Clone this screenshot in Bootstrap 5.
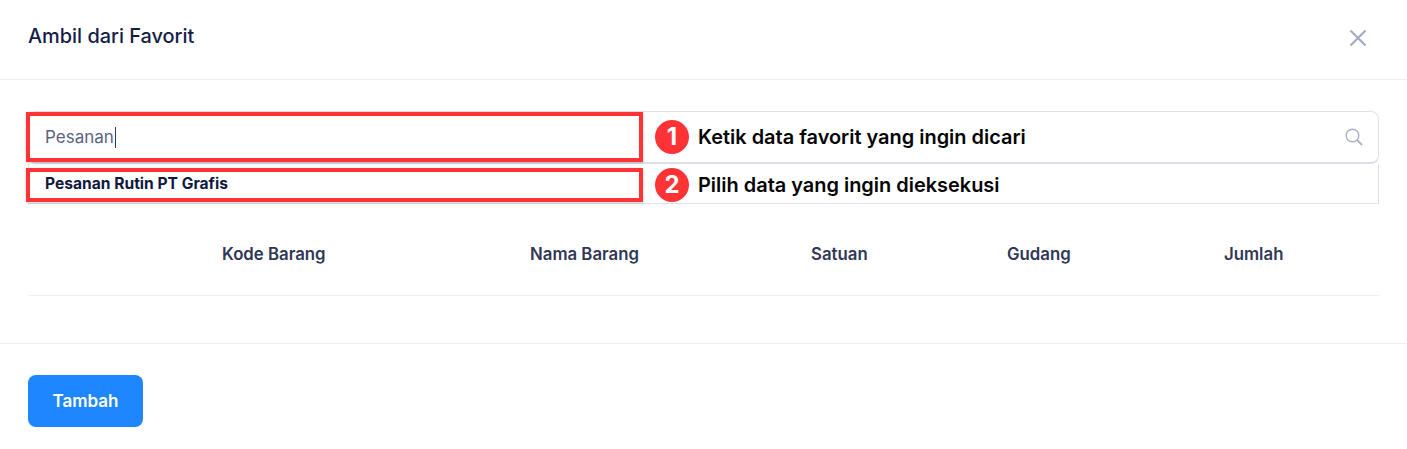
<!DOCTYPE html>
<html lang="id">
<head>
<meta charset="utf-8">
<title>Ambil dari Favorit</title>
<link href="https://cdn.jsdelivr.net/npm/bootstrap@5.3.0/dist/css/bootstrap.min.css" rel="stylesheet">
<style>
html,body{height:449px;overflow:hidden;background:#fff;font-family:Inter,"Liberation Sans",sans-serif}
.fav-head{height:80px;padding:0 28px;border-bottom:1px solid #eff0f4}
.fav-title{font-size:19.9px;font-weight:500;color:#141d47;margin:0 0 7px;line-height:24px}
.fav-close{color:#a3acc2;margin:0 10px 4px 0;padding:0;border:0;background:none;line-height:0}
.fav-body{padding:31px 28px 0;height:264px;position:relative;border-bottom:1px solid #eff0f4}
.fav-search{height:53px;border:1px solid #dfe1ec;border-bottom:2px solid #dcdfe9;border-radius:8px;padding:0 15px 0 16px;width:1351px}
.fav-typed{font-size:17px;color:#5a6484;padding-top:2px}
.fav-caret{display:inline-block;width:1px;height:21px;background:#2f3a63;vertical-align:-5px;margin-left:1px}
.fav-drop{height:40px;width:1351px;border:1px solid #dfe1ec;border-top:0;padding:0 16px;font-size:15.6px;font-weight:700;color:#12193f}
.fav-table{width:1352px;height:92px;padding-top:10px;border-bottom:1px solid #eff0f4;font-size:16.8px;font-weight:600;color:#2f3755}
.fav-c1{width:194px}.fav-c2{width:308px}.fav-c3{width:281px}.fav-c4{width:196px}.fav-c5{width:217px}
.fav-foot{padding:31px 28px}
.fav-btn{width:115px;height:52px;padding:2px 0 0;background:#1e86ff;border:0;border-radius:8px;font-size:17px;font-weight:600;color:#fff}
.mark-box{position:absolute;left:26px;width:617px;border:4px solid #ff3236;box-shadow:0 1px 3px rgba(0,0,0,.2)}
.mark-one{top:32px;height:50px}
.mark-two{top:88px;height:34px}
.mark-note{position:absolute;left:655px;display:flex;align-items:center;gap:9px;font-size:19.95px;font-weight:600;color:#050505;line-height:34px}
.note-one{top:40px}.note-two{top:88px}
.mark-dot{width:34px;height:34px;border-radius:50%;background:#ff3236;color:#fff;font-size:24px;font-weight:700;text-align:center;line-height:34px}
</style>
</head>
<body>
<header class="fav-head d-flex align-items-center justify-content-between">
  <h5 class="fav-title">Ambil dari Favorit</h5>
  <button class="fav-close" type="button" aria-label="Tutup">
    <svg width="22" height="22" viewBox="0 0 22 22" fill="none" stroke="currentColor" stroke-width="2.2"><path d="M3.5 3.5 18.5 18.5M18.5 3.5 3.5 18.5"/></svg>
  </button>
</header>
<main class="fav-body">
  <div class="fav-search d-flex align-items-center justify-content-between">
    <span class="fav-typed">Pesanan<span class="fav-caret"></span></span>
    <svg width="18" height="18" viewBox="0 0 18 18" fill="none" stroke="#a9b1c6" stroke-width="1.4"><circle cx="7.5" cy="7.5" r="6.3"/><path d="M12 12l5 5" stroke-width="1.8"/></svg>
  </div>
  <div class="fav-drop d-flex align-items-center">Pesanan Rutin PT Grafis</div>
  <div class="fav-table d-flex align-items-center">
    <div class="fav-c1"></div>
    <div class="fav-c2">Kode Barang</div>
    <div class="fav-c3">Nama Barang</div>
    <div class="fav-c4">Satuan</div>
    <div class="fav-c5">Gudang</div>
    <div>Jumlah</div>
  </div>
  <div class="mark-box mark-one"></div>
  <div class="mark-box mark-two"></div>
  <div class="mark-note note-one"><span class="mark-dot">1</span>Ketik data favorit yang ingin dicari</div>
  <div class="mark-note note-two"><span class="mark-dot">2</span>Pilih data yang ingin dieksekusi</div>
</main>
<footer class="fav-foot"><button class="btn fav-btn" type="button">Tambah</button></footer>
</body>
</html>
